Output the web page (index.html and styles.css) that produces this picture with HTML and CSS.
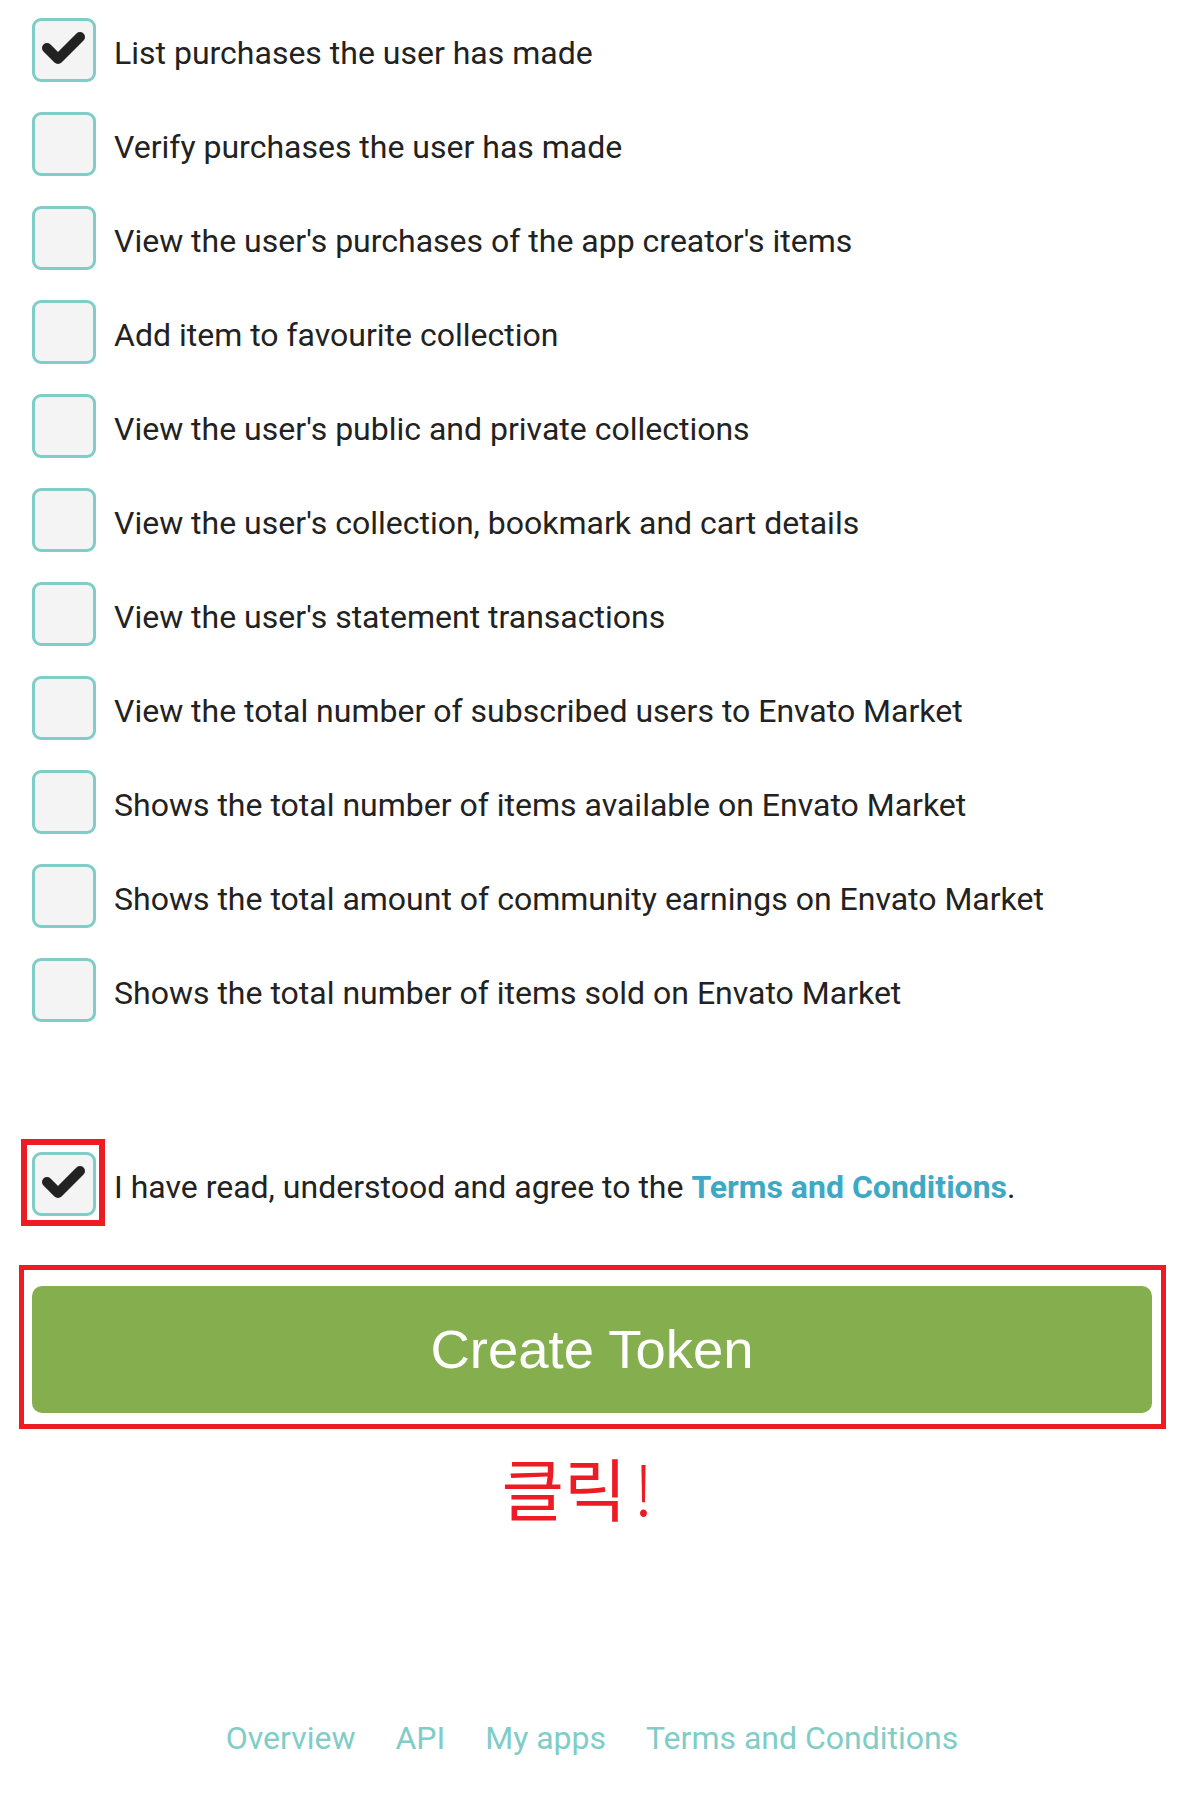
FILE: index.html
```html
<!DOCTYPE html>
<html lang="en">
<head>
<meta charset="utf-8">
<title>Create Token</title>
<link rel="stylesheet" href="styles.css">
</head>
<body>
<main class="page">
  <ul class="scopes">
    <li class="scope"><span class="box checked"><svg viewBox="0 0 64 64" class="tick"><polyline points="15,30 26,41 48,19"/></svg></span><span class="label">List purchases the user has made</span></li>
    <li class="scope"><span class="box"></span><span class="label">Verify purchases the user has made</span></li>
    <li class="scope"><span class="box"></span><span class="label">View the user's purchases of the app creator's items</span></li>
    <li class="scope"><span class="box"></span><span class="label">Add item to favourite collection</span></li>
    <li class="scope"><span class="box"></span><span class="label">View the user's public and private collections</span></li>
    <li class="scope"><span class="box"></span><span class="label">View the user's collection, bookmark and cart details</span></li>
    <li class="scope"><span class="box"></span><span class="label">View the user's statement transactions</span></li>
    <li class="scope"><span class="box"></span><span class="label">View the total number of subscribed users to Envato Market</span></li>
    <li class="scope"><span class="box"></span><span class="label">Shows the total number of items available on Envato Market</span></li>
    <li class="scope"><span class="box"></span><span class="label">Shows the total amount of community earnings on Envato Market</span></li>
    <li class="scope"><span class="box"></span><span class="label">Shows the total number of items sold on Envato Market</span></li>
  </ul>

  <div class="scope agree">
    <span class="box checked highlight-small"><svg viewBox="0 0 64 64" class="tick"><polyline points="15,30 26,41 48,19"/></svg></span>
    <span class="label">I have read, understood and agree to the <a class="terms" href="#">Terms and Conditions</a>.</span>
  </div>

  <div class="button-wrap">
    <button class="create" type="button">Create Token</button>
  </div>

  <p class="click">클릭<span class="bang">!</span></p>

  <nav class="footer">
    <a href="#">Overview</a>
    <a href="#">API</a>
    <a href="#">My apps</a>
    <a href="#">Terms and Conditions</a>
  </nav>
</main>
</body>
</html>
```

FILE: styles.css
```css
html, body {
  margin: 0;
  padding: 0;
  background: #ffffff;
}

body {
  font-family: Roboto, "Noto Sans", sans-serif;
  color: #222222;
  width: 1189px;
  height: 1816px;
  overflow: hidden;
}

.page {
  display: flex;
  flex-direction: column;
}

.scopes {
  list-style: none;
  margin: 0;
  padding: 18px 0 0 32px;
  display: flex;
  flex-direction: column;
  gap: 30px;
}

.scope {
  display: flex;
  align-items: center;
  height: 64px;
}

.box {
  position: relative;
  flex: none;
  width: 64px;
  height: 64px;
  box-sizing: border-box;
  border: 3px solid #7fcdc6;
  border-radius: 9px;
  background: #f4f4f4;
}

.tick {
  position: absolute;
  left: -3px;
  top: -3px;
  width: 64px;
  height: 64px;
}

.tick polyline {
  fill: none;
  stroke: #222222;
  stroke-width: 10;
  stroke-linecap: round;
  stroke-linejoin: round;
}

.label {
  font-size: 32px;
  margin-left: 18px;
  padding-top: 6px;
  white-space: nowrap;
}

.agree {
  margin: 130px 0 0 32px;
}

.highlight-small::after {
  content: "";
  position: absolute;
  left: -14px;
  right: -12px;
  top: -16px;
  bottom: -13px;
  border: 6px solid #ed1c24;
}

.terms {
  color: #3ea9c5;
  font-weight: 700;
  text-decoration: none;
}

.button-wrap {
  position: relative;
  margin: 70px 37px 0 32px;
}

.button-wrap::before {
  content: "";
  position: absolute;
  left: -13px;
  right: -14px;
  top: -21px;
  bottom: -16px;
  border: 5px solid #ed1c24;
}

.create {
  display: flex;
  align-items: center;
  justify-content: center;
  width: 100%;
  height: 127px;
  border: 0;
  border-radius: 10px;
  background: #85ae4f;
  color: #ffffff;
  font-family: "Liberation Sans", Arial, sans-serif;
  font-size: 54.5px;
  padding: 0;
}

.click {
  margin: 40px 0 0 0;
  padding-right: 34px;
  text-align: center;
  font-family: "Noto Sans CJK KR", sans-serif;
  font-size: 68px;
  line-height: 1;
  color: #ed1c24;
}

.bang {
  font-weight: 300;
  margin-left: 7px;
}

.footer {
  display: flex;
  justify-content: center;
  gap: 40px;
  margin-top: 198px;
  padding-right: 5px;
  font-size: 32px;
}

.footer a {
  color: #7fcdc6;
  text-decoration: none;
}
```
